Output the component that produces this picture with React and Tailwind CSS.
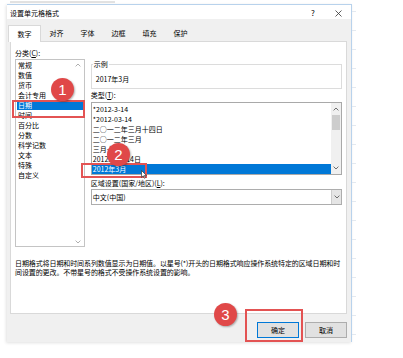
import React from "react";

const Chev = ({ up, color = "#606060" }) => (
  <svg width="6" height="4" viewBox="0 0 6 4" className="block">
    <path d={up ? "M0.6 3.4L3 1L5.4 3.4" : "M0.6 0.6L3 3L5.4 0.6"} fill="none" stroke={color} strokeWidth="0.9" />
  </svg>
);

const U = ({ children }) => <span className="underline underline-offset-1">{children}</span>;

export default function App() {
  const cats = ["常规", "数值", "货币", "会计专用", "日期", "时间", "百分比", "分数", "科学记数", "文本", "特殊", "自定义"];
  const types = ["*2012-3-14", "*2012-03-14", "二○一二年三月十四日", "二○一二年三月", "三月十四日", "2012年3月14日", "2012年3月"];
  const tabs = ["对齐", "字体", "边框", "填充", "保护"];
  return (
    <div className="relative w-[403px] h-[358px] overflow-hidden bg-white text-[7px] leading-[10px] text-black [font-family:'Noto_Sans_CJK_SC','Noto_Sans',sans-serif] flex">
      <div className="flex flex-col">
        <div className="h-[4px] pl-[10px]">
          <div className="w-[105px] h-[2px] mt-[1px] bg-[#e2e2e2]" />
        </div>
        <div className="ml-[7px] w-[345px] h-[338px] bg-[#f0f0f0] border-t border-r border-[#b8d2ec] shadow-[-1px_1px_3px_rgba(0,0,0,0.12)] flex flex-col">
          {/* title bar */}
          <div className="h-[14px] bg-white flex items-start pt-[3px] pl-[3px]">
            <span>设置单元格格式</span>
            <span className="ml-auto w-[10px] text-center text-[8px] leading-[10px]">?</span>
            <span className="ml-[15px] mr-[8px] w-[10px] h-[10px] flex items-center justify-center">
              <svg width="7" height="7" viewBox="0 0 7 7">
                <path d="M0.5 0.5L6.5 6.5M6.5 0.5L0.5 6.5" stroke="#333" strokeWidth="0.8" />
              </svg>
            </span>
          </div>
          {/* tabs */}
          <div className="h-[22px] pt-[6px] pl-[1px] flex items-end">
            <div className="relative z-10 w-[33px] h-[17px] -mb-px bg-white border border-b-0 border-[#d9d9d9] flex items-center justify-center">
              数字
            </div>
            {tabs.map((t) => (
              <div key={t} className="w-[31px] h-[16px] flex items-center justify-center">
                {t}
              </div>
            ))}
          </div>
          {/* panel */}
          <div className="ml-[3px] w-[337px] h-[273px] bg-white border border-[#d9d9d9] pt-[6px] px-[4px]">
            <div className="flex">
              {/* left */}
              <div className="w-[70px]">
                <div className="h-[10px]">
                  分类(<U>C</U>):
                </div>
                <div className="relative mt-[1px] h-[188px] border border-[#c4c4c4]">
                  {cats.map((c) => (
                    <div
                      key={c}
                      className={
                        "mx-[1px] h-[10px] pl-[1px] " + (c === "日期" ? "bg-[#0078d7] text-white" : "")
                      }
                    >
                      {c}
                    </div>
                  ))}
                  <div className="absolute right-[3px] top-[3px]">
                    <Chev up color="#a6a6a6" />
                  </div>
                  <div className="absolute right-[3px] bottom-[2px]">
                    <Chev color="#a6a6a6" />
                  </div>
                </div>
              </div>
              {/* right */}
              <div className="ml-[6px] w-[252px]">
                <fieldset className="mt-[11px] border border-[#dcdcdc] pb-[4px]">
                  <legend className="ml-[1px] px-[1px] leading-[10px]">示例</legend>
                  <div className="mt-[5px] pl-[4px] h-[10px]">2017年3月</div>
                </fieldset>
                <div className="mt-[1px] h-[10px]">
                  类型(<U>T</U>):
                </div>
                <div className="mt-[2px] h-[73px] border border-[#a9a9a9] flex">
                  <div className="flex-1 pt-[1px]">
                    {types.map((t, i) => (
                      <div
                        key={t}
                        className={
                          "h-[10px] pl-[1px] " + (i === 6 ? "bg-[#0078d7] text-white" : "")
                        }
                      >
                        {t}
                      </div>
                    ))}
                  </div>
                  <div className="w-[10px] bg-[#f0f0f0] flex flex-col items-center">
                    <div className="h-[12px] flex items-center">
                      <Chev up />
                    </div>
                    <div className="w-[8px] h-[15px] bg-[#cdcdcd]" />
                    <div className="flex-1" />
                    <div className="h-[12px] flex items-center">
                      <Chev />
                    </div>
                  </div>
                </div>
                <div className="mt-[3px] h-[10px]">
                  区域设置(国家/地区)(<U>L</U>):
                </div>
                <div className="mt-[1px] h-[16px] border border-[#adadad] bg-white flex">
                  <div className="flex-1 pl-[1px] leading-[14px]">中文(中国)</div>
                  <div className="w-[10px] bg-[#e5e5e5] border-l border-[#cccccc] flex items-center justify-center">
                    <Chev />
                  </div>
                </div>
              </div>
            </div>
            <div className="mt-[12px] leading-[9px] whitespace-nowrap tracking-[-0.1px]">
              <div>日期格式将日期和时间系列数值显示为日期值。以星号(*)开头的日期格式响应操作系统特定的区域日期和时</div>
              <div>间设置的更改。不带星号的格式不受操作系统设置的影响。</div>
            </div>
          </div>
          {/* buttons */}
          <div className="pt-[8px] pr-[4px] flex justify-end gap-[6px]">
            <div className="w-[42px] h-[16px] border border-[#0078d7] bg-[#e1e1e1] flex items-center justify-center">
              确定
            </div>
            <div className="w-[42px] h-[16px] border border-[#adadad] bg-[#e1e1e1] flex items-center justify-center">
              取消
            </div>
          </div>
        </div>
      </div>
      <div className="mt-[4px] w-[4px] h-[338px] bg-[repeating-linear-gradient(to_bottom,transparent_0,transparent_7px,#e3e9f0_7px,#e3e9f0_8px,transparent_8px,transparent_19px)]" />

      {/* annotations */}
      <div className="absolute left-[12px] top-[100px] w-[73px] h-[18px] border-2 border-[#e35353]" />
      <div className="absolute left-[81px] top-[163px] w-[66px] h-[15px] border-2 border-[#e35353]" />
      <div className="absolute left-[245px] top-[309px] w-[58px] h-[33px] border-2 border-[#e35353]" />

      <div className="absolute left-[51px] top-[78px] w-[23px] h-[23px] rounded-full bg-[#e04848] shadow-[1px_1px_2px_rgba(0,0,0,0.3)] flex items-center justify-center text-white text-[15px] leading-none [font-family:'Liberation_Sans',sans-serif]">
        1
      </div>
      <div className="absolute left-[107px] top-[143px] w-[23px] h-[23px] rounded-full bg-[#e04848] shadow-[1px_1px_2px_rgba(0,0,0,0.3)] flex items-center justify-center text-white text-[15px] leading-none [font-family:'Liberation_Sans',sans-serif]">
        2
      </div>
      <div className="absolute left-[214px] top-[303px] w-[23px] h-[23px] rounded-full bg-[#e04848] shadow-[1px_1px_2px_rgba(0,0,0,0.3)] flex items-center justify-center text-white text-[15px] leading-none [font-family:'Liberation_Sans',sans-serif]">
        3
      </div>

      <svg className="absolute left-[141px] top-[170px]" width="6" height="9" viewBox="0 0 6 9">
        <path d="M0.5 0.5L0.5 7.5L2.2 5.8L3.4 8.3L4.4 7.8L3.3 5.4L5.5 5.4Z" fill="#fff" stroke="#333" strokeWidth="0.7" />
      </svg>
    </div>
  );
}
